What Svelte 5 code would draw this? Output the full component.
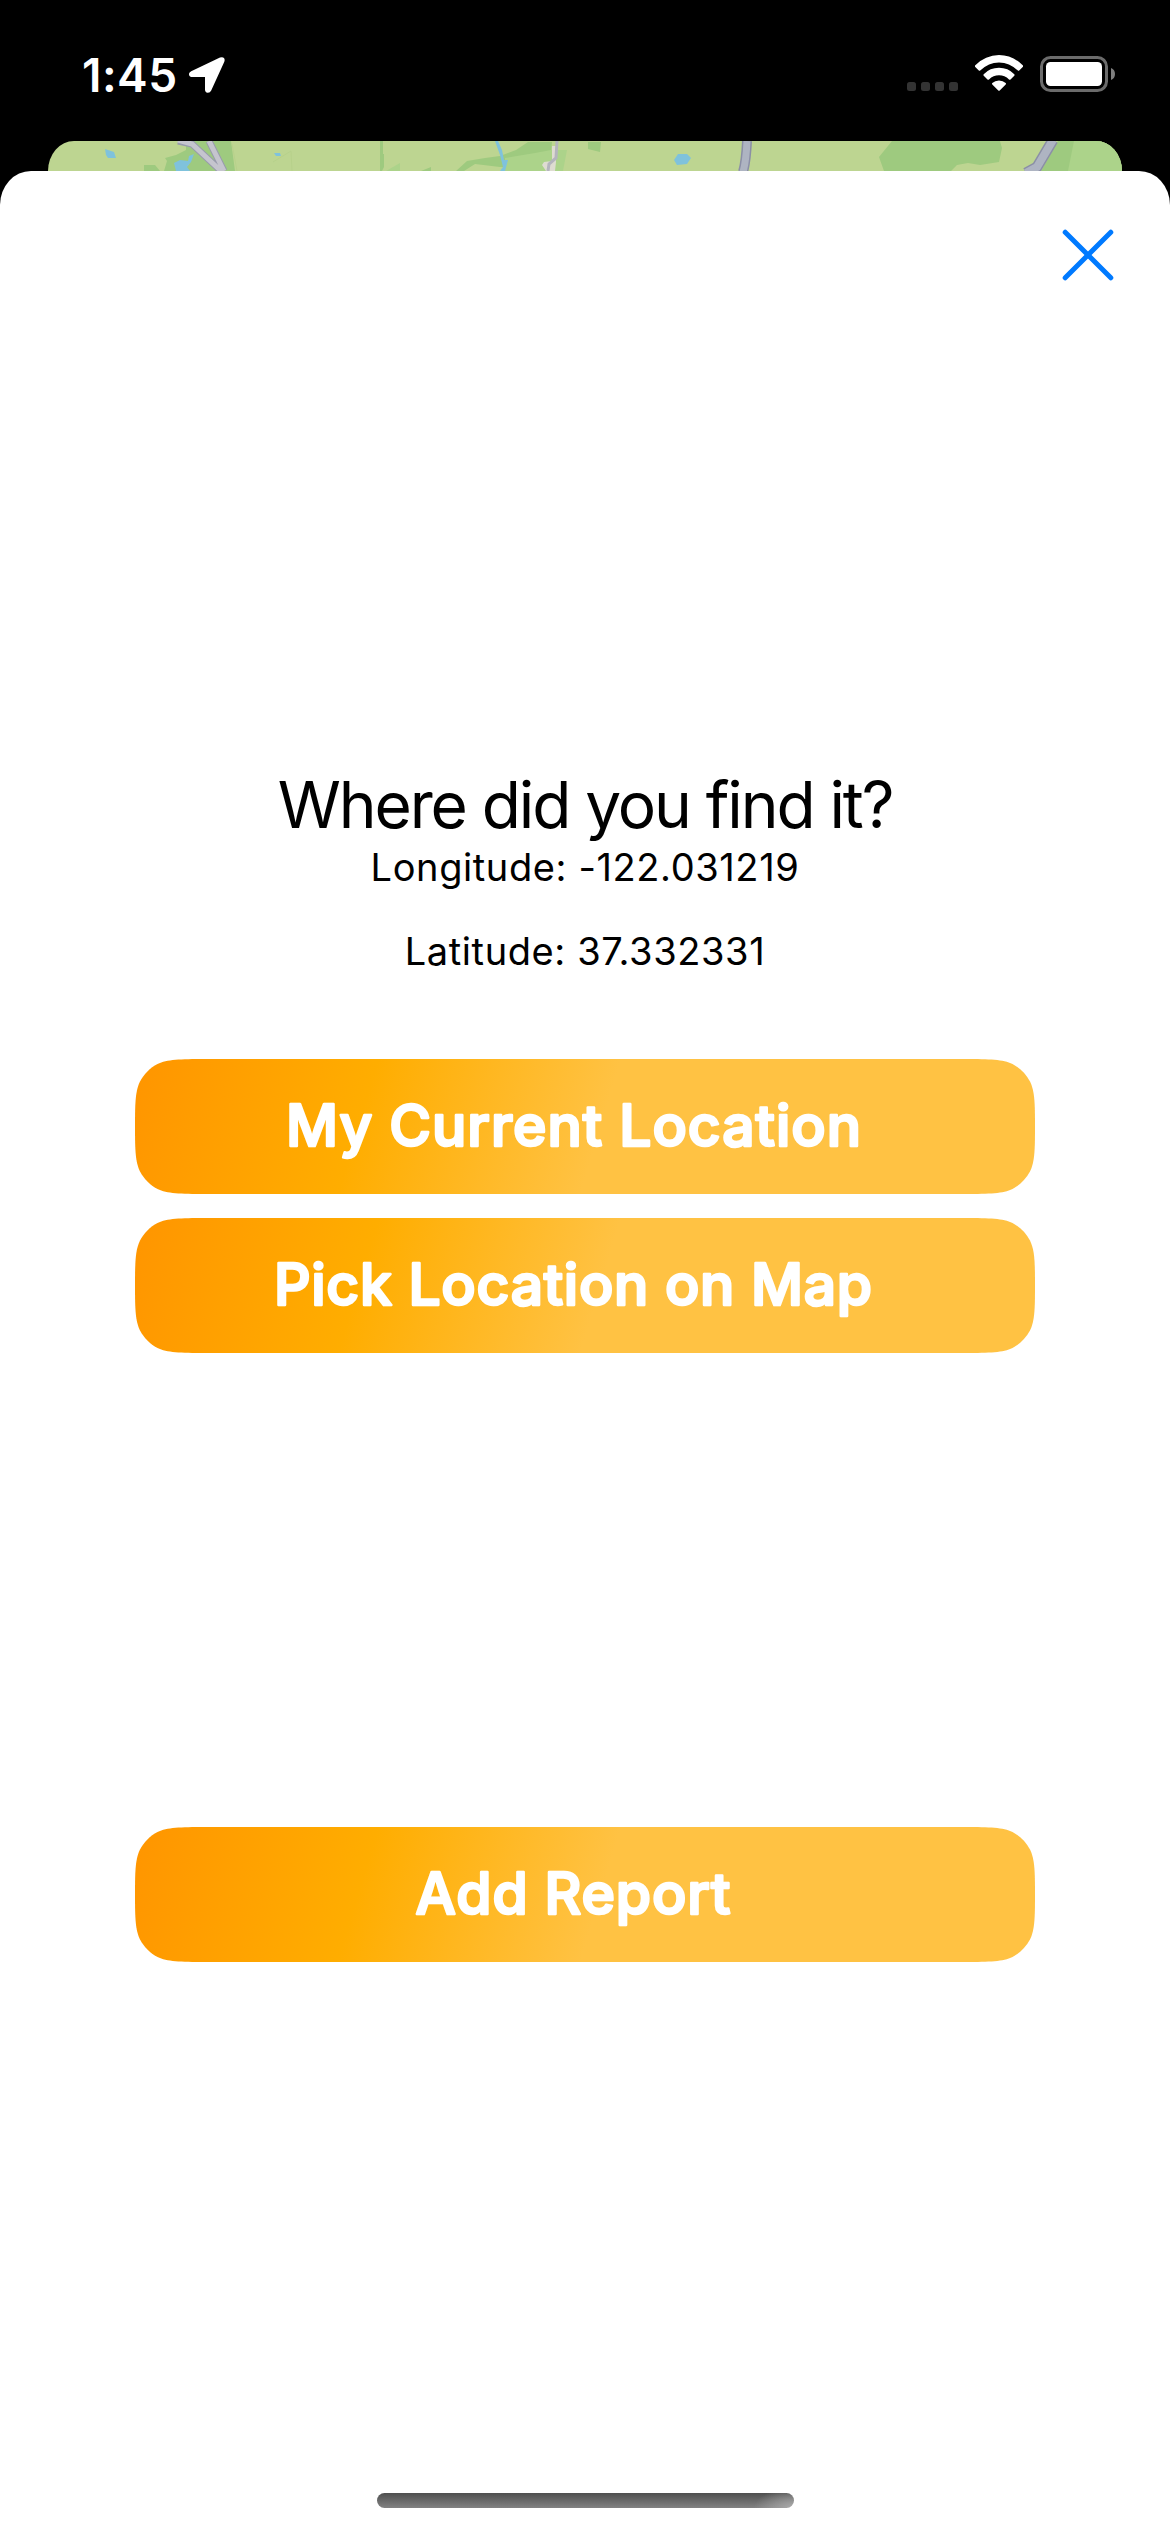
<script>
  const locationActions = [
    { label: 'My Current Location', x: 151, length: 575 },
    { label: 'Pick Location on Map', x: 139, length: 598 }
  ];
  const submitAction = { label: 'Add Report', x: 280.5, length: 315 };
  const longitude = '-122.031219';
  const latitude = '37.332331';
</script>

{#snippet action(item, id)}
  <button class="action" type="button">
    <svg viewBox="0 0 900 135" width="900" height="135">
      <defs>
        <linearGradient {id} gradientUnits="userSpaceOnUse" x1="0" y1="0" x2="446" y2="134">
          <stop offset="0" stop-color="#ff9500" />
          <stop offset="0.5" stop-color="#ffad00" />
          <stop offset="1" stop-color="#ffc243" />
        </linearGradient>
      </defs>
      <path
        fill="url(#{id})"
        d="M0 67.5C0 42 .5 32 5 22.5C9 15 15 9 22.5 5C32 .5 45 0 70 0H830C855 0 868 .5 877.500 5C885 9 891 15 895 22.500C899.500 32 900 42 900 67.500C900 93 899.500 103 895 112.500C891 120 885 126 877.500 130C868 134.500 855 135 830 135H70C45 135 32 134.500 22.500 130C15 126 9 120 5 112.500C.5 103 0 93 0 67.500Z"
      />
      <text class="action-label" x={item.x} y="87" textLength={item.length}>{item.label}</text>
    </svg>
  </button>
{/snippet}

<div class="screen">
  <header class="status">
    <div class="clock">
      <span class="time">1:45</span>
      <svg class="arrow" viewBox="0 0 36 36" width="36" height="36">
        <path d="M2.200 14.200L31 .5Q34 -.5 35.300 1.600Q36 3 35.200 5L22.200 33.500Q21 36 18.600 35.800Q16 35.500 16 32.500V20H3.500Q.4 20 0 17.400Q-.2 15.400 2.200 14.200Z" fill="#fff" />
      </svg>
    </div>
    <div class="indicators">
      <div class="signal"><i></i><i></i><i></i><i></i></div>
      <svg class="wifi" viewBox="0 0 48 36" width="48" height="36">
        <path d="M0 10.500Q10.500 0 24 0T48 10.500Q48.500 11.200 48 11.800L44.200 15.500Q43.500 16 42.800 15.500Q34.500 7.400 24 7.400T5.200 15.500Q4.500 16 3.800 15.500L0 11.800Q-.5 11.200 0 10.500Z" fill="#fff" />
        <path d="M8.700 19.200Q15 12.800 24 12.800T39.300 19.200Q40 20 39.300 20.700L35.500 24.400Q34.800 25 34 24.400Q29.800 20.300 24 20.300T14 24.400Q13.200 25 12.500 24.400L8.700 20.700Q8 20 8.700 19.200Z" fill="#fff" />
        <path d="M17.300 28Q20 25.400 24 25.400T30.700 28Q31.400 28.700 30.700 29.400L24.700 35.400Q24 36 23.300 35.400L17.300 29.400Q16.600 28.700 17.300 28Z" fill="#fff" />
      </svg>
      <svg class="battery" viewBox="0 0 76 36" width="76" height="36">
        <rect x="1.500" y="1.500" width="65" height="33" rx="9" fill="none" stroke="#6b6b6b" stroke-width="3" />
        <rect x="6" y="6" width="56" height="24" rx="4.500" fill="#fff" />
        <path d="M71 12Q75 13.500 75 18T71 24Z" fill="#7e7e7e" />
      </svg>
    </div>
  </header>

  <svg class="map" viewBox="48 141 1074 30" width="1074" height="30">
    <rect x="48" y="141" width="1074" height="30" fill="#bdd591" />
    <path d="M186 141H231L235 171H164L167 161L165 158L176 155L186 150Z" fill="#9eca7f" />
    <path d="M144 165H155L160 171H144ZM380 141H383V154H384V167L382 171H380Z" fill="#9eca7f" />
    <path d="M400 163L386 171H400Z" fill="#acd38a" />
    <path d="M105 149L114 152L116 158H108L106 155ZM174 163L180 160L188 161L189 156L194 154L191 162L187 167L190 171H176ZM274 153H280L281 156L276 156Z" fill="#7fc2dc" />
    <path d="M232 144L237 171M273 162L291 151L292 171" fill="none" stroke="#b7d18b" stroke-width="1" />
    <path d="M178 141L192 144L221 171M209 141L224 171" fill="none" stroke="#989bad" stroke-width="7" />
    <path d="M178 140L192 144L221 171M209 141L224 171" fill="none" stroke="#c5c5ce" stroke-width="5" />
    <path d="M456 171L467 161L485 158L500 156L516 150L528 142H552L551 154L543 162L530 168L500 167L475 164L464 171Z" fill="#9eca7f" />
    <path d="M505 158L535 153L551 150L567 150L563 171H505Z" fill="#acd38a" />
    <path d="M421 171L431 167V171ZM588 142H601L600 152L588 149Z" fill="#9eca7f" />
    <path d="M495 141H498L502 150L504 160L508 160L505 171H500L503 167L500 155Z" fill="#7fc2dc" />
    <path d="M552 146H556V162L555 171H546L542 165L544 162L552 161Z" fill="#dedcd1" />
    <path d="M557 141L556 158L549 164L548 171" fill="none" stroke="#b4b5bd" stroke-width="3" />
    <path d="M678 154L687 154L691 158L687 164L677 165L674 160Z" fill="#7fc2dc" />
    <path d="M747 141Q746 162 743 172" fill="none" stroke="#8b8fa6" stroke-width="10" />
    <path d="M747 141Q746 162 743 172" fill="none" stroke="#aeb4c2" stroke-width="7" />
    <path d="M892 141H1000L1002 148L999 162L980 165L968 163L957 165L951 171H884L879 157Z" fill="#9eca7f" />
    <path d="M1058 141H1122V171H1041Z" fill="#9eca7f" />
    <path d="M1074 141H1122V171H1068Z" fill="#acd38a" />
    <path d="M1053 140L1037 167L1026 173" fill="none" stroke="#8b8fa6" stroke-width="11" />
    <path d="M1053 140L1037 167L1026 173" fill="none" stroke="#aeb4c2" stroke-width="8" />
  </svg>

  <main class="sheet">
    <button class="close" type="button" aria-label="Close">
      <svg viewBox="0 0 52 52" width="52" height="52">
        <path d="M3.200 3.200L48.800 48.800M48.800 3.200L3.200 48.800" stroke="#007aff" stroke-width="5" stroke-linecap="round" />
      </svg>
    </button>

    <section class="prompt">
      <h1>Where did you find it?</h1>
      <p class="longitude">Longitude: {longitude}</p>
      <p class="latitude">Latitude: {latitude}</p>
    </section>

    <div class="choices">
      {#each locationActions as item, i}
        {@render action(item, `fill-${i}`)}
      {/each}
    </div>

    <div class="submit">
      {@render action(submitAction, 'fill-submit')}
    </div>

    <div class="home"></div>
  </main>
</div>

<style>
  :global(body) {
    background: #000;
  }
  .screen {
    display: flex;
    flex-direction: column;
    align-items: center;
    width: 1170px;
    height: 2532px;
    overflow: hidden;
    background: #000;
    color: #000;
    font-family: Inter, 'Liberation Sans', sans-serif;
  }
  .screen svg {
    display: block;
  }
  .status {
    box-sizing: border-box;
    display: flex;
    justify-content: space-between;
    width: 100%;
    height: 141px;
    padding: 55px 54px 0 82px;
  }
  .clock {
    display: flex;
    height: 40px;
    gap: 12px;
  }
  .time {
    width: 95px;
    font-size: 46px;
    font-weight: 600;
    line-height: 40px;
    letter-spacing: 0.5px;
    color: #fff;
    white-space: nowrap;
  }
  .arrow {
    margin-top: 2px;
  }
  .indicators {
    display: flex;
    height: 37px;
  }
  .signal {
    display: flex;
    gap: 5px;
    margin: 27px 17px 0 0;
  }
  .signal i {
    width: 9px;
    height: 9px;
    border-radius: 2.5px;
    background: #333;
  }
  .battery {
    margin: 1px 0 0 17px;
  }
  .map {
    flex: none;
    border-radius: 26px 26px 0 0 / 30px 30px 0 0;
  }
  .sheet {
    box-sizing: border-box;
    display: flex;
    flex-direction: column;
    align-items: center;
    width: 100%;
    height: 2361px;
    padding: 58px 0 24px;
    border-radius: 31px 31px 0 0 / 34px 34px 0 0;
    background: #fff;
  }
  button {
    display: block;
    padding: 0;
    border: 0;
    background: none;
    font: inherit;
  }
  .close {
    align-self: flex-end;
    margin-right: 56px;
  }
  .prompt {
    display: flex;
    flex-direction: column;
    align-items: center;
    height: 207px;
    margin-top: 485px;
    white-space: nowrap;
  }
  h1,
  p {
    margin: 0;
    font-weight: 400;
  }
  h1 {
    font-size: 64px;
    line-height: 78px;
    letter-spacing: -2.1px;
  }
  p {
    font-size: 38px;
    line-height: 46px;
    letter-spacing: 0.6px;
  }
  .latitude {
    margin-top: 38px;
  }
  .choices {
    display: flex;
    flex-direction: column;
    gap: 24px;
    margin-top: 86px;
  }
  .submit {
    margin-top: 474px;
  }
  .action-label {
    font-size: 57px;
    font-weight: 500;
    fill: #fff;
    stroke: #fff;
    stroke-width: 2.6px;
    stroke-linejoin: round;
  }
  .home {
    width: 417px;
    height: 15px;
    margin-top: auto;
    border-radius: 8px;
    background:
      radial-gradient(ellipse 40px 20px at 100% 100%, #ababab, transparent),
      linear-gradient(#4f4f4f, #828282);
  }
</style>
